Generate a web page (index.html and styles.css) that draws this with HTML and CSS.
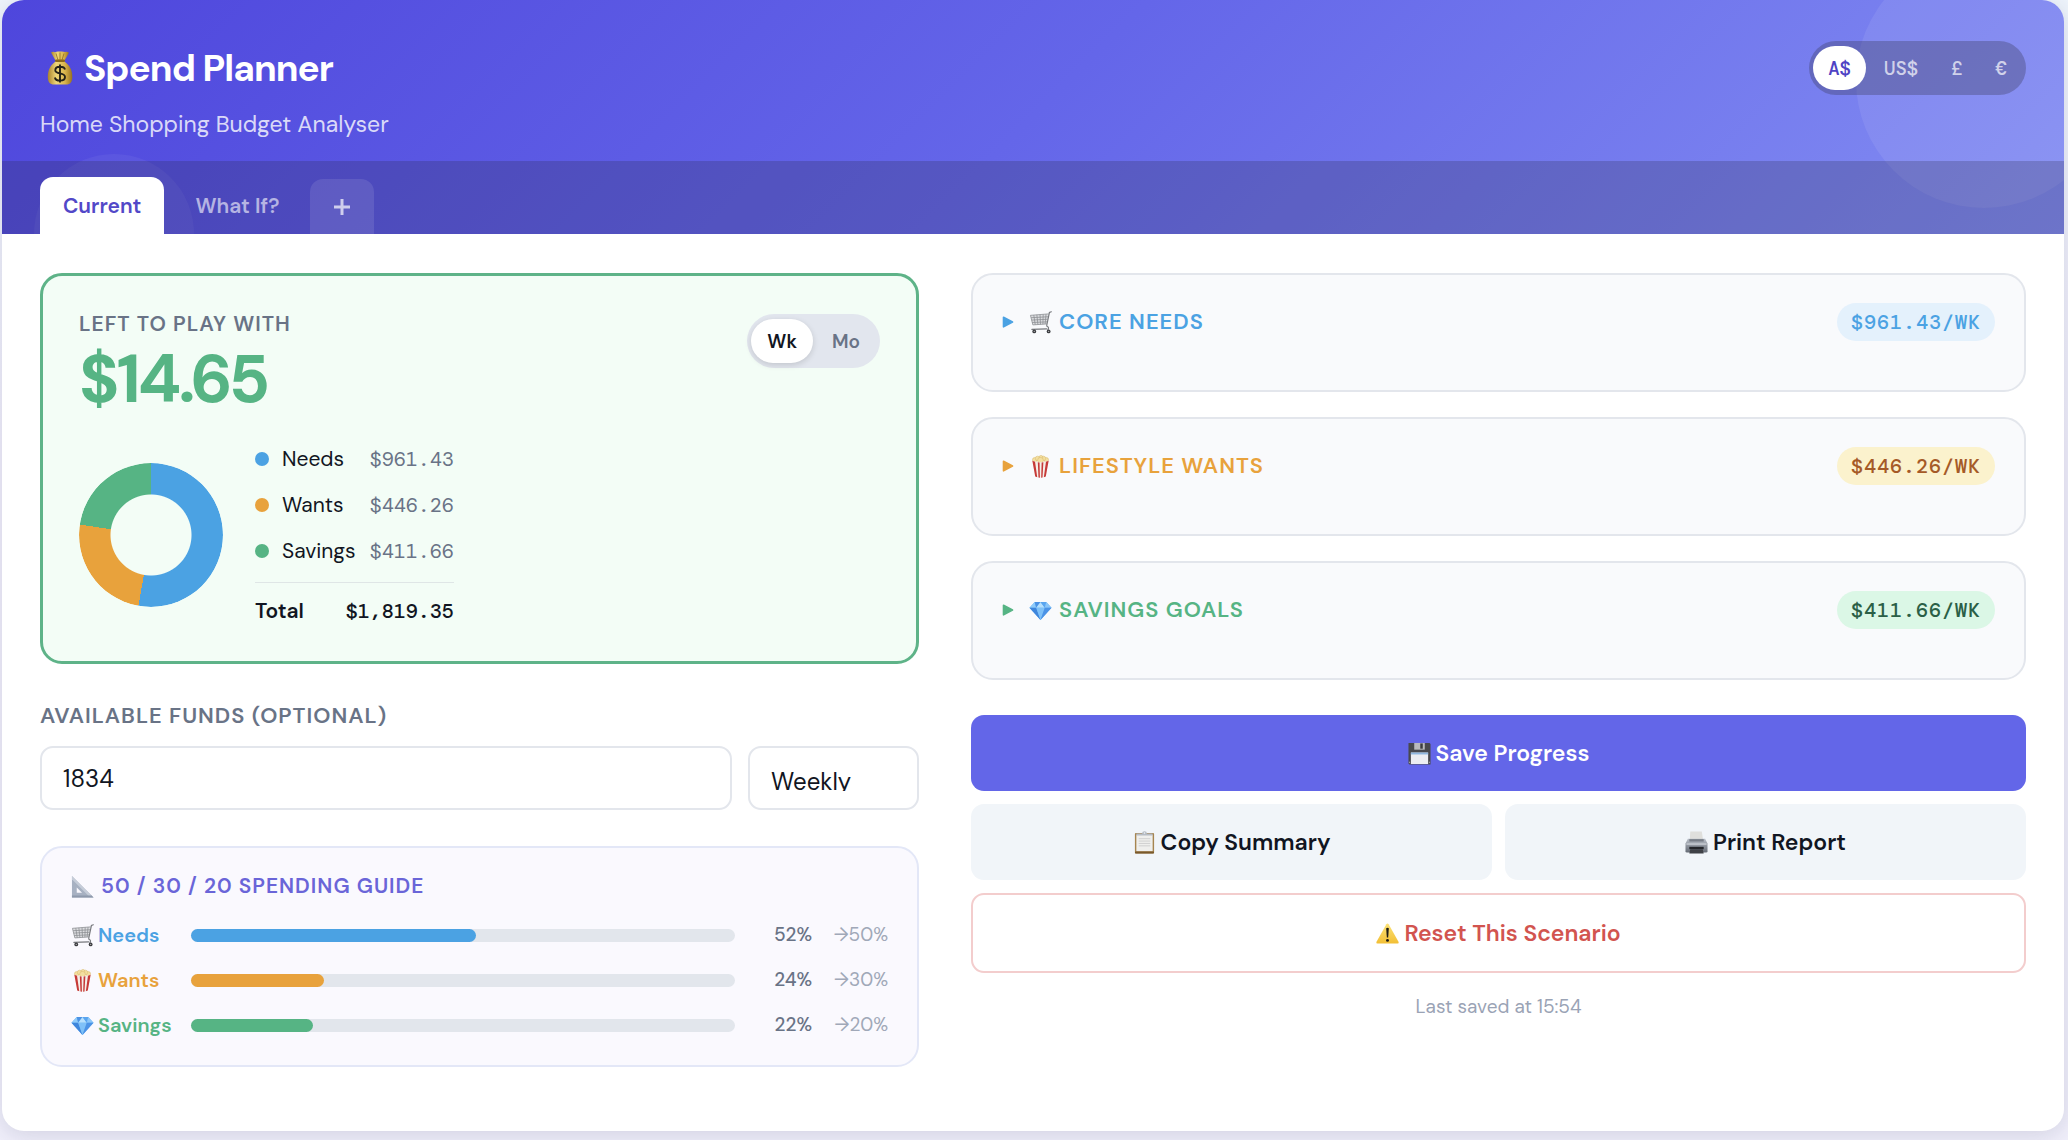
FILE: index.html
```html
<!DOCTYPE html>
<html lang="en">
<head>
<meta charset="utf-8">
<meta name="viewport" content="width=device-width, initial-scale=1">
<title>Spend Planner</title>
<link rel="stylesheet" href="styles.css">
</head>
<body>
<svg class="sprite" aria-hidden="true">
  <defs>
    <linearGradient id="gold" x1="0" x2="1"><stop offset="0" stop-color="#a9822c"/><stop offset=".35" stop-color="#efd778"/><stop offset=".7" stop-color="#d9b44c"/><stop offset="1" stop-color="#96701f"/></linearGradient>
    <linearGradient id="sun" x1="0" y1="0" x2="0" y2="1"><stop offset="0" stop-color="#fbe277"/><stop offset="1" stop-color="#f2bf35"/></linearGradient>
    <linearGradient id="steel" x1="0" y1="0" x2="0" y2="1"><stop offset="0" stop-color="#b9bfc8"/><stop offset="1" stop-color="#656b75"/></linearGradient>
  </defs>
  <symbol id="i-bag" viewBox="0 0 26 34">
    <path d="M4 1.500Q6 .2 8 1.200Q10 .2 12.500 .6Q16 0 18 1Q20 .4 22 1.700L17.500 9.500H8.500Z" fill="url(#gold)"/>
    <path d="M9 2.500L11 9M13 1.500V9M17 2.500L15 9" stroke="#8d6b20" stroke-width=".8"/>
    <path d="M8.500 10.500C3.500 14 .8 19 .8 25.500C.8 31.500 3 33.500 7 33.500H19C23.500 33.500 25.300 31 25.300 25.500C25.300 19 22.500 14 17.500 10.500Z" fill="url(#gold)"/>
    <rect x="8" y="8.500" width="10" height="2.600" rx="1.300" fill="#8a671c"/>
    <path d="M18 18.500C17.500 16.500 15.500 15.800 13 15.800C10.200 15.800 8.300 17 8.300 19.200C8.300 24 18 20.800 18 26C18 28.400 16 29.600 13 29.600C10.200 29.600 8.300 28.600 7.900 26.500M13 13.500V31.600" fill="none" stroke="#252217" stroke-width="1.900"/>
  </symbol>
  <symbol id="i-cart" viewBox="0 0 24 24">
    <path d="M1.500 4.500L20.500 3L18.500 13.500L4 14.500Z" fill="#dcdde0"/>
    <path d="M1.500 4.500L20.500 3M2.200 7L20 6M2.800 9.500L19.500 8.600M3.300 12L19 11.300M4 14.500L18.500 13.500M1.500 4.500L4 14.500M5 4.300L6.500 14.300M8.200 4L9.300 14.200M11.500 3.800L12 14M14.800 3.500L14.500 13.800M17.800 3.300L16.800 13.600" fill="none" stroke="#8b8d91" stroke-width=".8"/>
    <path d="M23.300 .8L21.300 1.600L18.600 14.500Q18.300 16 19.500 16.500Q21 17.200 20 19L19.500 20M3 19.200L18.500 18.600" fill="none" stroke="#77797d" stroke-width="1.200" stroke-linecap="round"/>
    <circle cx="5.500" cy="21.300" r="2" fill="#3b3c40"/><circle cx="20.500" cy="21.300" r="2" fill="#3b3c40"/>
    <circle cx="5.500" cy="21.300" r=".7" fill="#aaa"/><circle cx="20.500" cy="21.300" r=".7" fill="#aaa"/>
  </symbol>
  <symbol id="i-popcorn" viewBox="0 0 24 24">
    <g fill="#f3dfa0" stroke="#d8b565" stroke-width=".5"><circle cx="6" cy="5" r="2.400"/><circle cx="18" cy="5" r="2.400"/><circle cx="9" cy="3.600" r="2.400"/><circle cx="15" cy="3.600" r="2.400"/><circle cx="12.500" cy="2.300" r="1.900"/><circle cx="12" cy="5.500" r="3"/></g>
    <path d="M3.500 6Q12 9 20.500 6L17.500 22.500Q12 24.300 6.500 22.500Z" fill="#f5efe9"/>
    <path d="M3.500 6L6.300 7L8.600 23.200L6.500 22.500ZM9.200 7.600L11 7.800L11.400 23.800L9.900 23.500ZM13.200 7.800L15 7.600L14.100 23.500L12.700 23.800ZM17.700 7L20.500 6L17.500 22.500L15.500 23.200Z" fill="#c63a38"/>
  </symbol>
  <symbol id="i-gem" viewBox="0 0 24 24">
    <path d="M6 3H18L23.500 9L12 22L.5 9Z" fill="#63aef2"/>
    <path d="M6 3L7.500 9H.5Z" fill="#8fcbfa"/><path d="M6 3L12 3L7.500 9Z" fill="#4b92e4"/><path d="M12 3L16.500 9H7.500Z" fill="#b7e0fd"/><path d="M12 3H18L16.500 9Z" fill="#5aa5ef"/><path d="M18 3L23.500 9H16.500Z" fill="#8bc6f8"/>
    <path d="M.5 9H7.500L12 22Z" fill="#3f86dc"/><path d="M7.500 9H16.500L12 22Z" fill="#7fc1f8"/><path d="M16.500 9H23.500L12 22Z" fill="#4c93e6"/>
  </symbol>
  <symbol id="i-ruler" viewBox="0 0 24 24">
    <path d="M1 1L23.500 23.500H1ZM6 13V18.500H11.500Z" fill="#a7b1c2" fill-rule="evenodd"/>
    <path d="M1 1L23.500 23.500H20L1 4.500Z" fill="#c5ccd8"/>
    <path d="M1 21.500H21.500L23.500 23.500H1Z" fill="#8e99ac"/>
  </symbol>
  <symbol id="i-disk" viewBox="0 0 24 24">
    <path d="M.5 1H22.500L23.500 2V23.500H1.500L.5 22.500Z" fill="#48494d"/>
    <rect x="6.500" y="1" width="11" height="7" fill="#b9babd"/><rect x="12.800" y="1.500" width="2.600" height="5.500" fill="#3b3c40"/>
    <rect x="3" y="11" width="18" height="12" fill="#eceef2"/><rect x="3" y="11" width="18" height="2" fill="#8fb7df"/>
    <rect x="1" y="20.500" width="1.200" height="1.500" fill="#999"/><rect x="21.800" y="20.500" width="1.200" height="1.500" fill="#999"/>
  </symbol>
  <symbol id="i-clip" viewBox="0 0 24 24">
    <rect x="2" y="2" width="20" height="21.500" rx="1" fill="#a68550"/><rect x="2" y="21.500" width="20" height="2" rx="1" fill="#79592c"/>
    <rect x="3.500" y="4" width="17" height="17" fill="#efefed"/><path d="M6 8H18M6 10.500H18M6 13H18M6 15.500H18" stroke="#cfcfcf"/>
    <path d="M3.500 2.500H9.500Q9.500 .3 12 .3Q14.500 .3 14.500 2.500H20.500V4.700H3.500Z" fill="#b6bcc4"/><circle cx="12" cy="2" r=".8" fill="#f2f5f9"/>
  </symbol>
  <symbol id="i-printer" viewBox="0 0 24 24">
    <path d="M5.500 .5H17.500L19 10H5Z" fill="#dfdfdc"/>
    <path d="M3 8H21L23.500 13V21Q23.500 22.500 22 22.500H2Q.5 22.500 .5 21V13Z" fill="url(#steel)"/>
    <path d="M4.500 8.500H19.500V11H4.500Z" fill="#777d87"/><rect x="1.500" y="13" width="21" height="1.200" fill="#d4d8de"/>
    <path d="M4.500 16.500H19.500V19H4.500Z" fill="#24262b"/><path d="M5.500 19H18.500L19.500 23.500H4.500Z" fill="#3f4147"/>
  </symbol>
  <symbol id="i-warn" viewBox="0 0 24 24">
    <path d="M10.800 2.300Q12 .6 13.200 2.300L23.600 20.800Q24 22.500 22.500 22.500H1.500Q0 22.500 .4 20.800Z" fill="url(#sun)"/>
    <path d="M10.600 6.500Q12 5.600 13.400 6.500L12.700 16.300H11.300Z" fill="#1d1b16"/><circle cx="12" cy="19.200" r="1.500" fill="#1d1b16"/>
  </symbol>
  <symbol id="i-caret" viewBox="0 0 12 12">
    <path d="M1.500 1.200L10.500 6L1.500 10.800Z" fill="currentColor" stroke="currentColor" stroke-width="1.600" stroke-linejoin="round"/>
  </symbol>
</svg>

<div class="app">
  <header class="hero">
    <div class="hero-top">
      <div>
        <h1 class="title"><svg class="bag" aria-hidden="true"><use href="#i-bag"/></svg>Spend Planner</h1>
        <p class="subtitle">Home Shopping Budget Analyser</p>
      </div>
      <div class="pill pill-dark" role="group" aria-label="Currency">
        <button type="button" class="seg is-on">A$</button>
        <button type="button" class="seg">US$</button>
        <button type="button" class="seg">£</button>
        <button type="button" class="seg">€</button>
      </div>
    </div>
    <nav class="tabs" aria-label="Scenarios">
      <button type="button" class="tab is-on">Current</button>
      <button type="button" class="tab">What If?</button>
      <button type="button" class="tab tab-add" aria-label="Add scenario"><svg viewBox="0 0 18 18" aria-hidden="true"><path d="M9 1V17M1 9H17" stroke="currentColor" stroke-width="3"/></svg></button>
    </nav>
  </header>

  <main class="content">
    <div class="col">
      <section class="balance">
        <div class="balance-head">
          <div>
            <h2 class="eyebrow">Left to play with</h2>
            <p class="amount">$14.65</p>
          </div>
          <div class="pill pill-light" role="group" aria-label="Period">
            <button type="button" class="seg is-on">Wk</button>
            <button type="button" class="seg">Mo</button>
          </div>
        </div>
        <div class="breakdown">
          <div class="donut" role="img" aria-label="Share of needs, wants and savings"></div>
          <dl class="legend">
            <div class="legend-row needs"><dt>Needs</dt><dd>$961.43</dd></div>
            <div class="legend-row wants"><dt>Wants</dt><dd>$446.26</dd></div>
            <div class="legend-row savings"><dt>Savings</dt><dd>$411.66</dd></div>
            <div class="legend-total"><dt>Total</dt><dd>$1,819.35</dd></div>
          </dl>
        </div>
      </section>

      <section class="funds">
        <label class="eyebrow funds-label" for="funds">Available funds (optional)</label>
        <div class="funds-row">
          <input class="field" id="funds" type="text" inputmode="decimal" value="1834">
          <select class="field field-select" aria-label="Funds period"><option>Weekly</option><option>Monthly</option></select>
        </div>
      </section>

      <section class="guide">
        <h2 class="guide-title"><svg class="emoji" aria-hidden="true"><use href="#i-ruler"/></svg>50 / 30 / 20 Spending guide</h2>
        <div class="guide-rows">
          <div class="guide-row needs">
            <span class="guide-name"><svg class="emoji" aria-hidden="true"><use href="#i-cart"/></svg>Needs</span>
            <span class="track"><span class="fill" style="width:52.4%"></span></span>
            <span class="pct">52%</span><span class="goal">→50%</span>
          </div>
          <div class="guide-row wants">
            <span class="guide-name"><svg class="emoji" aria-hidden="true"><use href="#i-popcorn"/></svg>Wants</span>
            <span class="track"><span class="fill" style="width:24.4%"></span></span>
            <span class="pct">24%</span><span class="goal">→30%</span>
          </div>
          <div class="guide-row savings">
            <span class="guide-name"><svg class="emoji" aria-hidden="true"><use href="#i-gem"/></svg>Savings</span>
            <span class="track"><span class="fill" style="width:22.4%"></span></span>
            <span class="pct">22%</span><span class="goal">→20%</span>
          </div>
        </div>
      </section>
    </div>

    <div class="col">
      <div class="groups">
        <details class="group needs">
          <summary><svg class="caret" aria-hidden="true"><use href="#i-caret"/></svg><svg class="emoji" aria-hidden="true"><use href="#i-cart"/></svg><span class="group-name">Core needs</span><span class="badge">$961.43/wk</span></summary>
        </details>
        <details class="group wants">
          <summary><svg class="caret" aria-hidden="true"><use href="#i-caret"/></svg><svg class="emoji" aria-hidden="true"><use href="#i-popcorn"/></svg><span class="group-name">Lifestyle wants</span><span class="badge">$446.26/wk</span></summary>
        </details>
        <details class="group savings">
          <summary><svg class="caret" aria-hidden="true"><use href="#i-caret"/></svg><svg class="emoji" aria-hidden="true"><use href="#i-gem"/></svg><span class="group-name">Savings goals</span><span class="badge">$411.66/wk</span></summary>
        </details>
      </div>
      <div class="actions">
        <button type="button" class="btn btn-primary"><svg class="emoji" aria-hidden="true"><use href="#i-disk"/></svg>Save Progress</button>
        <button type="button" class="btn"><svg class="emoji" aria-hidden="true"><use href="#i-clip"/></svg>Copy Summary</button>
        <button type="button" class="btn"><svg class="emoji" aria-hidden="true"><use href="#i-printer"/></svg>Print Report</button>
        <button type="button" class="btn btn-danger"><svg class="emoji" aria-hidden="true"><use href="#i-warn"/></svg>Reset This Scenario</button>
      </div>
      <p class="saved">Last saved at 15:54</p>
    </div>
  </main>
</div>
</body>
</html>
```
FILE: styles.css
```css
:root {
  --sans: "DM Sans", Inter, "Liberation Sans", sans-serif;
  --mono: "DM Mono", "Liberation Mono", monospace;
  --ink: #111522;
  --muted: #697386;
  --line: #e3e6ec;
  --indigo: #6366e8;
  --blue: #4ba2e3;
  --orange: #e8a23c;
  --green: #56b484;
}

* { box-sizing: border-box; }

body {
  margin: 0;
  min-height: 100vh;
  background: linear-gradient(180deg, #eff5fc, #f1effb 40%, #f1f0fb);
  color: var(--ink);
  font: 20px/28px var(--sans);
}

h1, h2, p, dl, dd { margin: 0; }
button, input, select { font-family: inherit; color: inherit; }
button { border: 0; background: none; padding: 0; cursor: pointer; }
.sprite { position: absolute; width: 0; height: 0; }
.emoji { width: 23px; height: 23px; flex: none; }

.needs { --tone: var(--blue); --badge-bg: #e4f1fc; --badge-ink: #4ba2e3; }
.wants { --tone: var(--orange); --badge-bg: #fbf2cd; --badge-ink: #a55a27; }
.savings { --tone: var(--green); --badge-bg: #dbf7e6; --badge-ink: #2a5f46; }

.app {
  margin: 0 4px 9px 2px;
  border-radius: 22px;
  overflow: hidden;
  background: #fff;
  box-shadow: 0 4px 24px rgba(40, 38, 90, .16);
}

/* Header */
.hero {
  position: relative;
  overflow: hidden;
  color: #fff;
  background: linear-gradient(135deg, #4e46dc, #6466e9 50%, #828cf2);
}
.hero::before, .hero::after {
  content: "";
  position: absolute;
  border-radius: 50%;
  background: rgba(255, 255, 255, .08);
}
.hero::before { top: -48px; right: -48px; width: 256px; height: 256px; }
.hero::after { bottom: -80px; left: 32px; width: 160px; height: 160px; background: rgba(255, 255, 255, .05); }
.hero-top, .tabs { position: relative; z-index: 1; display: flex; }
.hero-top { justify-content: space-between; align-items: flex-start; padding: 41px 38px 22px; }
.title { display: flex; align-items: center; gap: 11px; padding-left: 7px; font-size: 37px; line-height: 54px; font-weight: 700; letter-spacing: -1px; }
.bag { width: 26px; height: 34px; }
.subtitle { margin-top: 14px; font-size: 23px; line-height: 30px; color: rgba(255, 255, 255, .8); }

.pill { display: flex; gap: 3px; padding: 5px 4px; border-radius: 27px; }
.seg { height: 44px; padding: 0 16px; border-radius: 22px; font-size: 19px; font-weight: 600; }
.pill-dark { background: rgba(60, 60, 90, .34); }
.pill-dark .seg { padding: 0 15px; font-family: var(--mono); font-weight: 500; color: rgba(255, 255, 255, .7); }
.pill-dark .seg.is-on { background: #fff; color: #4f43c4; }
.pill-light { background: #e2e6ee; }
.pill-light .seg { color: var(--muted); }
.pill-light .seg.is-on { background: #fff; color: var(--ink); box-shadow: 0 2px 6px rgba(0, 0, 0, .14); }

.tabs { align-items: flex-end; gap: 8px; padding: 16px 38px 0; background: rgba(40, 40, 70, .24); }
.tab { height: 57px; padding: 0 23px; border-radius: 13px 13px 0 0; font-size: 21px; font-weight: 600; color: rgba(255, 255, 255, .6); }
.tab.is-on { background: #fff; color: #5248c8; }
.tab-add { display: grid; place-items: center; height: 55px; width: 64px; background: rgba(255, 255, 255, .1); color: rgba(255, 255, 255, .7); }
.tab-add svg { width: 18px; height: 18px; }

/* Two-column body */
.content { display: grid; grid-template-columns: 5fr 6fr; gap: 52px; padding: 39px 38px 64px; }

.eyebrow { font-size: 21px; line-height: 20px; font-weight: 600; letter-spacing: 1px; text-transform: uppercase; color: var(--muted); }

.balance { padding: 38px 36px 35px; border: 3px solid #5eb388; border-radius: 22px; background: #f3fdf6; }
.balance-head { display: flex; justify-content: space-between; align-items: flex-start; }
.amount { font-size: 67px; line-height: 92px; font-weight: 700; letter-spacing: -3px; color: var(--green); }
.breakdown { display: flex; align-items: center; gap: 32px; margin-top: 18px; }
.donut {
  width: 144px;
  height: 144px;
  border-radius: 50%;
  background: conic-gradient(var(--blue) 0 52.8%, var(--orange) 0 77.3%, var(--green) 0);
  mask: radial-gradient(circle, transparent 40px, #000 41px);
}
.legend { display: flex; flex-direction: column; gap: 16px; line-height: 30px; }
.legend-row, .legend-total { display: flex; justify-content: space-between; gap: 14px; }
.legend dt { font-size: 21px; }
.legend-row dt { display: flex; align-items: center; gap: 13px; }
.legend-row dt::before { content: ""; width: 14px; height: 14px; border-radius: 50%; background: var(--tone); }
.legend dd { font-family: var(--mono); }
.legend-row dd { color: var(--muted); }
.legend-total { padding-top: 13px; border-top: 1px solid #dfe6e6; font-weight: 600; }
.legend-total dd { font-weight: 700; }

.funds-label { display: block; margin-top: 42px; font-size: 22px; }
.funds-row { display: grid; grid-template-columns: 1fr 171px; gap: 16px; margin-top: 20px; }
.field { width: 100%; height: 64px; padding: 0 21px; border: 2px solid var(--line); border-radius: 13px; background: #fff; font-size: 24px; outline: 0; }
.field-select { appearance: none; padding: 18px 21px 17px; }

.guide { margin-top: 36px; padding: 24px 29px 25px; border: 2px solid #e3e7f7; border-radius: 22px; background: #faf9fe; }
.guide-title { display: flex; align-items: center; gap: 7px; font-size: 21px; line-height: 28px; font-weight: 600; letter-spacing: 1px; text-transform: uppercase; color: #6a65d8; }
.guide-rows { display: grid; gap: 15px; margin-top: 20px; }
.guide-row { display: grid; grid-template-columns: 104px 1fr 61px 60px; gap: 16px; align-items: center; line-height: 30px; }
.guide-name { display: flex; align-items: center; gap: 4px; color: var(--tone); font-weight: 600; white-space: nowrap; }
.track { height: 13px; border-radius: 7px; background: #e2e6ec; }
.fill { display: block; height: 100%; border-radius: 7px; background: var(--tone); }
.pct { text-align: right; font-size: 19px; font-weight: 500; color: var(--muted); }
.goal { text-align: right; font-size: 19px; white-space: nowrap; color: #a0a8b8; }

/* Category groups */
.groups { display: grid; gap: 25px; }
.group { min-height: 119px; padding: 28px 29px; border: 2px solid var(--line); border-radius: 22px; background: #f9fafc; }
.group summary { display: flex; align-items: center; list-style: none; cursor: pointer; color: var(--tone); }
.caret { width: 12px; height: 12px; margin-right: 15px; }
.group-name { flex: 1; margin-left: 7px; font-size: 22px; font-weight: 600; letter-spacing: 1px; text-transform: uppercase; }
.badge { padding: 5px 14px; border-radius: 19px; background: var(--badge-bg); color: var(--badge-ink); font-family: var(--mono); font-weight: 700; letter-spacing: 1px; text-transform: uppercase; }

.actions { display: grid; grid-template-columns: 1fr 1fr; gap: 13px; margin-top: 35px; }
.btn { display: flex; align-items: center; justify-content: center; gap: 5px; padding: 24px; border-radius: 13px; background: #f1f5f9; font-size: 23px; line-height: 28px; font-weight: 600; }
.btn-primary { grid-column: 1 / -1; background: var(--indigo); color: #fff; }
.btn-danger { grid-column: 1 / -1; border: 2px solid #f3cdcd; background: #fff; color: #d2544f; }
.saved { margin-top: 20px; text-align: center; font-size: 19px; color: #9aa3b5; }
```
